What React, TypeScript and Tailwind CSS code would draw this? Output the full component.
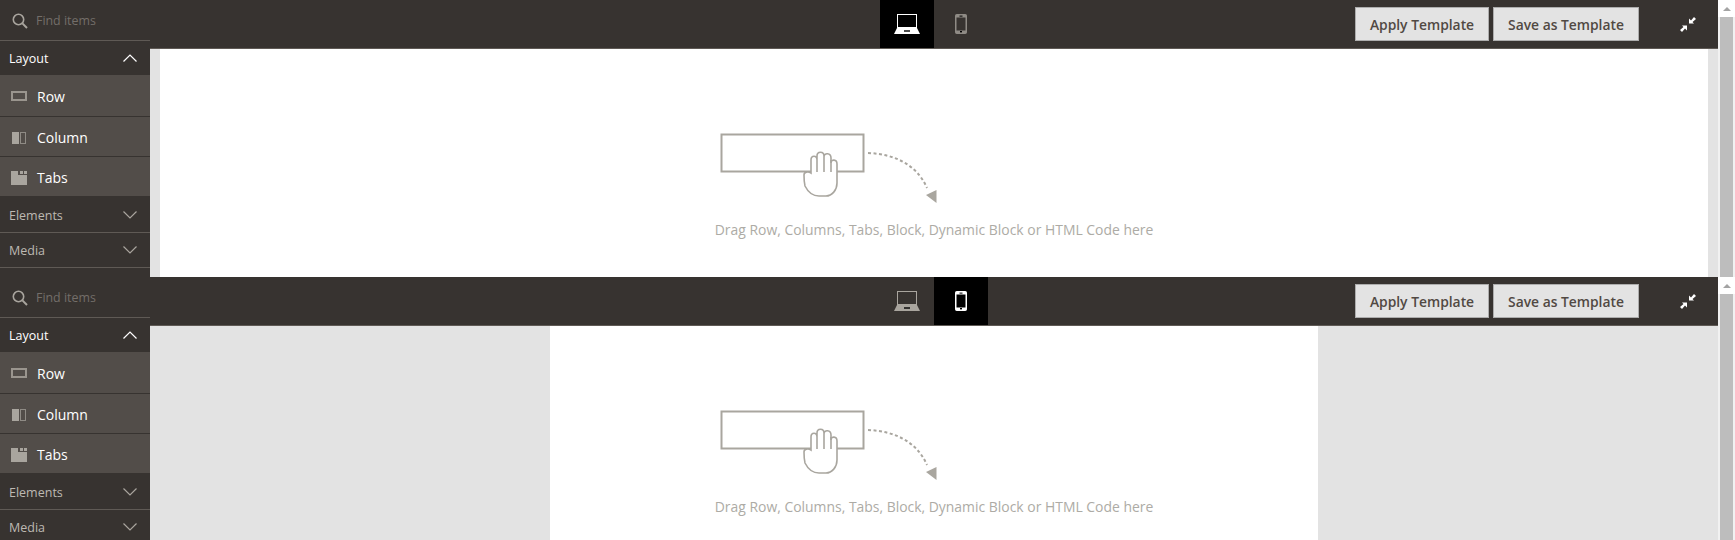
const font = "font-['Open_Sans',sans-serif]";

function SearchIcon() {
  return (
    <svg width="16" height="16" viewBox="0 0 16 16" fill="none" stroke="#a9a59e" strokeWidth="1.6">
      <circle cx="6.5" cy="6.5" r="5.2" />
      <path d="M10.4 10.4 15 15" strokeWidth="2" />
    </svg>
  );
}

function Chevron({ up, color }: { up?: boolean; color: string }) {
  return (
    <svg width="14" height="8" viewBox="0 0 14 8" fill="none" stroke={color} strokeWidth="1.2">
      <path d={up ? "M0.5 7.5 7 1l6.5 6.5" : "M0.5 0.5 7 7l6.5-6.5"} />
    </svg>
  );
}

function RowIcon() {
  return (
    <svg width="16" height="10" viewBox="0 0 16 10" fill="none">
      <rect x="1" y="1" width="14" height="8" stroke="#9a958e" strokeWidth="2" />
    </svg>
  );
}

function ColumnIcon() {
  return (
    <svg width="14" height="12" viewBox="0 0 14 12">
      <rect x="0" y="0" width="7" height="12" fill="#a9a59e" />
      <rect x="8.5" y="0.5" width="5" height="11" fill="none" stroke="#8f8b85" />
    </svg>
  );
}

function TabsIcon() {
  return (
    <svg width="16" height="14" viewBox="0 0 16 14" fill="#a9a59e">
      <path d="M0 0h7v4h9v10H0z" />
      <path d="M9 0h3v3H9zM13 0h3v3h-3z" />
    </svg>
  );
}

function LaptopIcon({ color }: { color: string }) {
  return (
    <svg width="26" height="20" viewBox="0 0 26 20" fill="none">
      <rect x="3.5" y="0.5" width="19" height="13" stroke={color} />
      <path d="M3 14h20l3 6H0z" fill={color} />
      <rect x="10" y="16" width="6" height="2" fill="#000" fillOpacity="0.7" />
    </svg>
  );
}

function PhoneIcon({ color }: { color: string }) {
  return (
    <svg width="12" height="20" viewBox="0 0 12 20" fill="none">
      <rect x="0.75" y="0.75" width="10.5" height="18.5" rx="1" stroke={color} strokeWidth="1.5" />
      <path d="M1 1h10v2.5H1zM1 16.5h10V19H1z" fill={color} />
      <rect x="4.5" y="1.6" width="3" height="1" fill="#000" />
      <rect x="5" y="17" width="2" height="1.4" fill="#000" />
    </svg>
  );
}

function CollapseIcon() {
  return (
    <svg width="16" height="15" viewBox="0 0 16 15" fill="#fff">
      <path d="M9 1.500V6.500H14L12.500 5 16 2 14 0 11 3.500z" />
      <path d="M7 13.500V8.500H2L3.500 10 0 13 2 15 5 11.500z" />
    </svg>
  );
}

function DropHint() {
  return (
    <svg width="438" height="80" viewBox="715 125 438 80" fill="none" stroke="#a9a69f" strokeWidth="1.6">
      <rect x="721.500" y="134.500" width="142" height="37" strokeWidth="2" />
      <path
        d="M811 173V160C811 155 817 155 817 160V156C817 151 824 151 824 156V157C824 152 831 153 831 158V163C831 159 837 159 837 164V183C837 190 832 196 826 196H819C813 196 808 192 805 186C804 182 804 178 804 175C804 172 808 171 811 173Z"
        fill="#fff"
      />
      <path d="M817 160V172M824 157V172M831 160V172" />
      <path d="M868 153C895 154 917 165 927 188" strokeDasharray="3 2.500" strokeWidth="2" />
      <path d="M926 195 936.500 190V203Z" fill="#a9a69f" stroke="none" />
    </svg>
  );
}

function Sidebar() {
  const items = [
    { label: "Row", icon: <RowIcon />, cls: "h-[42px] pt-[1px]" },
    { label: "Column", icon: <ColumnIcon />, cls: "h-[40px] pt-[2px]" },
    { label: "Tabs", icon: <TabsIcon />, cls: "h-[40px] pt-[2px]" },
  ];

  return (
    <div className="w-[150px] shrink-0 bg-[#373330]">
      <div className="flex h-[41px] items-center border-b border-[#5f5a55] pl-[12px] pt-[2px]">
        <SearchIcon />
        <span className="ml-[8px] text-[12.400px] text-[#736e69]">Find items</span>
      </div>
      <div className="flex h-[34px] items-center justify-between pl-[9px] pr-[13px] text-[12.500px] text-white">
        <span className="pt-[3px]">Layout</span>
        <Chevron up color="#ffffff" />
      </div>
      {items.map((item) => (
        <div
          key={item.label}
          className={`flex items-center border-b border-[#373330] bg-[#524d49] text-[14px] text-white last:border-b-0 ${item.cls}`}
        >
          <span className="flex w-[37px] shrink-0 justify-center pl-[1px]">{item.icon}</span>
          {item.label}
        </div>
      ))}
      <div className="flex h-[36px] items-center justify-between border-b border-[#5f5a55] pl-[9px] pr-[13px] text-[12.500px] text-[#bdb9b2]">
        <span className="pt-[4px]">Elements</span>
        <Chevron color="#a9a59e" />
      </div>
      <div className="flex h-[35px] items-center justify-between border-b border-[#5f5a55] pl-[9px] pr-[13px] text-[12.500px] text-[#bdb9b2]">
        <span className="pt-[2px]">Media</span>
        <Chevron color="#a9a59e" />
      </div>
    </div>
  );
}

function Toolbar({ mobile }: { mobile?: boolean }) {
  return (
    <div className="flex h-[49px] shrink-0 items-stretch border-b border-[#5f5a55] bg-[#373330]">
      <div className="flex-1" />
      <div className="flex">
        <div className={`flex w-[54px] items-center justify-center ${mobile ? "" : "bg-black"}`}>
          <LaptopIcon color={mobile ? "#a9a59e" : "#ffffff"} />
        </div>
        <div className={`flex w-[54px] items-center justify-center ${mobile ? "bg-black" : ""}`}>
          <PhoneIcon color={mobile ? "#ffffff" : "#8f8b85"} />
        </div>
      </div>
      <div className="flex flex-1 items-center justify-end">
        <button className="h-[34px] w-[134px] border border-[#adadad] bg-[#e3e3e3] pt-[2px] text-[13.850px] font-semibold text-[#514943]">
          Apply Template
        </button>
        <button className="ml-[4px] h-[34px] w-[146px] border border-[#adadad] bg-[#e3e3e3] pt-[2px] text-[13.850px] font-semibold text-[#514943]">
          Save as Template
        </button>
        <span className="ml-[41px] mr-[22px] flex">
          <CollapseIcon />
        </span>
      </div>
    </div>
  );
}

function Scrollbar() {
  return (
    <div className="flex w-[17px] shrink-0 flex-col bg-[#f1f1f1]">
      <div className="flex h-[17px] shrink-0 items-center justify-center bg-white">
        <div className="h-0 w-0 border-x-[4px] border-b-[4px] border-x-transparent border-b-[#a3a3a3]" />
      </div>
      <div className="mx-[2px] flex-1 bg-[#bdbdbd]" />
    </div>
  );
}

function Section({ mobile }: { mobile?: boolean }) {
  return (
    <div className="flex h-[277px] shrink-0 overflow-hidden">
      <Sidebar />
      <div className="flex min-w-0 flex-1 flex-col">
        <Toolbar mobile={mobile} />
        <div className="flex flex-1 justify-center bg-[#e3e3e3]">
          <div className={`flex flex-col items-center bg-white pt-[76px] ${mobile ? "w-[768px]" : "w-[1548px]"}`}>
            <DropHint />
            <p className="mt-[15px] text-[13.930px] text-[#adaba5]">
              Drag Row, Columns, Tabs, Block, Dynamic Block or HTML Code here
            </p>
          </div>
        </div>
      </div>
      <Scrollbar />
    </div>
  );
}

export default function App() {
  return (
    <div className={`flex h-[540px] flex-col overflow-hidden ${font}`}>
      <Section />
      <Section mobile />
    </div>
  );
}
